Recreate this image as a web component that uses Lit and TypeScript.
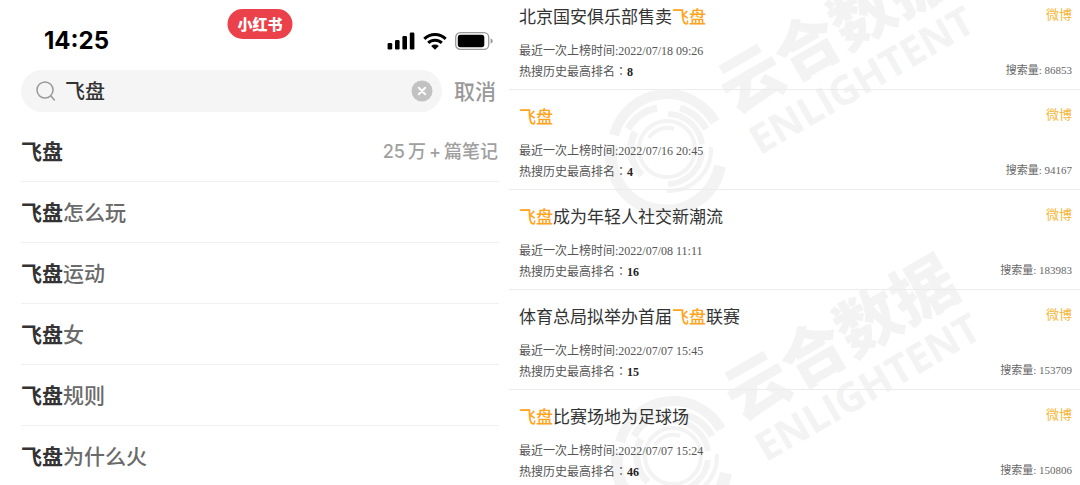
import { LitElement, html, css, svg } from "lit";
import { customElement, property, state } from "lit/decorators.js";

const KEYWORD = "飞盘";

interface Suggestion {
  tail: string;
  notes?: boolean;
}

interface HotTopic {
  before: string;
  after: string;
  time: string;
  rank: number;
  volume: number;
}

const SUGGESTIONS: Suggestion[] = [
  { tail: "", notes: true },
  { tail: "怎么玩" },
  { tail: "运动" },
  { tail: "女" },
  { tail: "规则" },
  { tail: "为什么火" },
];

const TOPICS: HotTopic[] = [
  { before: "北京国安俱乐部售卖", after: "", time: "2022/07/18 09:26", rank: 8, volume: 86853 },
  { before: "", after: "", time: "2022/07/16 20:45", rank: 4, volume: 94167 },
  { before: "", after: "成为年轻人社交新潮流", time: "2022/07/08 11:11", rank: 16, volume: 183983 },
  { before: "体育总局拟举办首届", after: "联赛", time: "2022/07/07 15:45", rank: 15, volume: 153709 },
  { before: "", after: "比赛场地为足球场", time: "2022/07/07 15:24", rank: 46, volume: 150806 },
];

@customElement("search-panel")
export class SearchPanel extends LitElement {
  @state() private query = KEYWORD;

  static styles = css`
    :host {
      display: block;
      padding: 0 10px 0 21px;
      font-family: "Inter", "Noto Sans CJK SC", sans-serif;
    }
    .status {
      position: relative;
      display: flex;
      justify-content: space-between;
      align-items: flex-end;
      height: 54px;
      padding: 0 6px 0 23px;
      box-sizing: border-box;
    }
    .time {
      font-size: 24px;
      line-height: 26px;
      font-weight: 700;
      color: #000;
    }
    .brand {
      position: absolute;
      top: 9px;
      left: 50%;
      transform: translateX(-50%);
      padding: 0 10px;
      border-radius: 15px;
      background: #eb414a;
      color: #fff;
      font-family: "Noto Sans CJK SC", sans-serif;
      font-weight: 900;
      font-size: 15px;
      line-height: 30px;
      white-space: nowrap;
    }
    .indicators {
      display: flex;
      align-items: center;
      height: 26px;
      gap: 8px;
    }
    .indicators svg,
    .magnifier,
    .clear svg {
      display: block;
      flex: none;
    }
    .search {
      display: flex;
      align-items: center;
      gap: 12px;
      padding: 16px 3px 9px 0;
    }
    .field {
      display: flex;
      align-items: center;
      flex: 1;
      min-width: 0;
      height: 42px;
      padding: 0 9px 0 14px;
      gap: 8px;
      border-radius: 21px;
      background: #f5f5f5;
      box-sizing: border-box;
    }
    input {
      flex: 1;
      min-width: 0;
      padding: 0;
      border: 0;
      outline: 0;
      background: none;
      font: 500 20px/30px "Noto Sans CJK SC", sans-serif;
      color: #333;
    }
    button {
      padding: 0;
      border: 0;
      background: none;
      cursor: pointer;
    }
    .cancel {
      padding-bottom: 2px;
      font: 500 21px/30px "Noto Sans CJK SC", sans-serif;
      color: #999;
    }
    ul {
      margin: 0;
      padding: 0;
      list-style: none;
    }
    li + li {
      border-top: 1px solid #f0f0f0;
    }
    .row {
      display: flex;
      justify-content: space-between;
      align-items: center;
      height: 60px;
      padding: 0 1px 2px 0;
      box-sizing: border-box;
      color: #6a6a6a;
      font-family: "Noto Sans CJK SC", sans-serif;
      font-size: 21px;
      font-weight: 500;
      line-height: 30px;
      text-decoration: none;
      white-space: nowrap;
    }
    b {
      font-weight: 700;
      color: #333;
    }
    .notes {
      display: flex;
      gap: 3px;
      padding-top: 3px;
      color: #a0a0a0;
      font-family: "Inter", "Noto Sans CJK SC", sans-serif;
      font-size: 18px;
    }
  `;

  render() {
    return html`
      <header class="status">
        <span class="time">14:25</span>
        <span class="brand">小红书</span>
        <div class="indicators">
          <svg width="28" height="18" viewBox="0 0 28 18" aria-hidden="true">
            <rect x="0.6" y="11" width="4.6" height="6.5" rx="1.3" />
            <rect x="8" y="8" width="4.6" height="9.5" rx="1.3" />
            <rect x="15.4" y="4" width="4.6" height="13.5" rx="1.3" />
            <rect x="22.8" y="0.5" width="4.6" height="17" rx="1.3" />
          </svg>
          <svg width="24" height="18" viewBox="0 0 24 18" aria-hidden="true">
            <g fill="none" stroke="#000" stroke-width="3">
              <path d="M1.3 6.8 A15.5 15.5 0 0 1 22.7 6.8" />
              <path d="M5.2 10.9 A9.8 9.8 0 0 1 18.8 10.9" />
            </g>
            <path d="M8.2 13.9 A5.6 5.6 0 0 1 15.8 13.9 L12 17.7 Z" />
          </svg>
          <svg width="38" height="18" viewBox="0 0 38 18" aria-hidden="true">
            <rect x="0.7" y="0.7" width="33" height="16.6" rx="4.6" fill="none" stroke="#999" stroke-width="1.3" />
            <rect x="2.8" y="2.8" width="26.5" height="12.4" rx="2.6" />
            <path d="M35.6 6.2 Q37.8 7.2 37.8 9 Q37.8 10.8 35.6 11.8 Z" fill="#999" />
          </svg>
        </div>
      </header>
      <form class="search" @submit=${(e: Event) => e.preventDefault()}>
        <div class="field">
          <svg class="magnifier" width="22" height="22" viewBox="0 0 22 22" fill="none" stroke="#999" stroke-width="1.5" stroke-linecap="round" aria-hidden="true">
            <circle cx="10" cy="10" r="8" />
            <path d="M15.8 15.8 L19.4 20" />
          </svg>
          <input
            type="text"
            aria-label="搜索"
            .value=${this.query}
            @input=${(e: Event) => (this.query = (e.target as HTMLInputElement).value)}
          />
          <button class="clear" type="button" aria-label="清除" @click=${() => (this.query = "")}>
            <svg width="22" height="22" viewBox="0 0 22 22" aria-hidden="true">
              <circle cx="11" cy="11" r="10.5" fill="#c2c2c2" />
              <path d="M7.8 7.8 L14.2 14.2 M14.2 7.8 L7.8 14.2" stroke="#fff" stroke-width="2" stroke-linecap="round" />
            </svg>
          </button>
        </div>
        <button class="cancel" type="button">取消</button>
      </form>
      <ul>
        ${SUGGESTIONS.map(
          (s) => html`<li>
            <a class="row" href="#">
              <span><b>${KEYWORD}</b>${s.tail}</span>
              ${s.notes
                ? html`<span class="notes"><span>25</span><span>万</span><span>+</span><span>篇笔记</span></span>`
                : null}
            </a>
          </li>`
        )}
      </ul>
    `;
  }
}

const watermark = (x: number, y: number) => svg`
  <g transform="translate(${x} ${y})">
    <g class="ring">
      <path stroke-width="10" d="M-53 -14 A55 55 0 0 1 48 -27" />
      <path stroke-width="12" d="M-55 -4 A55 55 0 1 0 53 17" />
      <path stroke-width="7" d="M-39 -20 A43 43 0 0 1 -10 -41" />
      <path stroke-width="7" d="M13 -41 A43 43 0 0 1 39 -20" />
      <path stroke-width="7" d="M-32 -17 A36 36 0 0 0 -25 26" />
      <path stroke-width="6" d="M1 -35 A35 35 0 0 1 35 -5" />
      <path stroke-width="6" d="M35 4 A35 35 0 0 1 1 35" />
      <path stroke-width="4" d="M44 -2 A42 42 0 0 1 0 42" />
      <circle stroke-width="4" r="28" />
      <path stroke-width="4" d="M-18 -11 A21 21 0 0 1 7 -20" />
    </g>
    <g transform="rotate(-30)">
      <text class="mark-cn" x="76" y="5">云合数据</text>
      <text class="mark-en" x="77" y="52">ENLIGHTENT</text>
    </g>
  </g>
`;

@customElement("hot-topic")
export class HotTopicRow extends LitElement {
  @property({ attribute: false }) topic!: HotTopic;

  static styles = css`
    :host {
      display: flex;
      justify-content: space-between;
      height: 99px;
      padding: 0 8px 0 10px;
      border-bottom: 1px solid #ececec;
      font-family: "Liberation Serif", "Noto Sans CJK SC", serif;
      white-space: nowrap;
    }
    h2 {
      margin: 13px 0 12px;
      font: 400 17px/26px "Noto Sans CJK SC", sans-serif;
      color: #333;
    }
    em {
      font-style: normal;
      font-weight: 500;
      color: #ffa41c;
    }
    p {
      margin: 0;
      font-size: 12px;
      line-height: 21px;
      color: #555;
    }
    b {
      color: #222;
    }
    .colon {
      font-family: "Noto Sans CJK TC", sans-serif;
      line-height: 0;
    }
    .side {
      display: flex;
      flex-direction: column;
      align-items: flex-end;
      justify-content: space-between;
      padding: 15px 0 9px;
      box-sizing: border-box;
    }
    a {
      font-size: 13px;
      line-height: 20px;
      color: #f5b83d;
      text-decoration: none;
    }
    .volume {
      font-size: 11px;
      line-height: 20px;
      color: #666;
    }
  `;

  render() {
    const t = this.topic;
    return html`
      <div>
        <h2>${t.before}<em>${KEYWORD}</em>${t.after}</h2>
        <p>最近一次上榜时间:${t.time}</p>
        <p>热搜历史最高排名<span class="colon" lang="zh-TW">：</span><b>${t.rank}</b></p>
      </div>
      <div class="side">
        <a href="#">微博</a>
        <span class="volume">搜索量: ${t.volume}</span>
      </div>
    `;
  }
}

@customElement("topic-panel")
export class TopicPanel extends LitElement {
  static styles = css`
    :host {
      display: block;
      position: relative;
    }
    .watermarks {
      position: absolute;
      inset: 0;
      width: 100%;
      height: 100%;
      overflow: hidden;
    }
    .ring {
      fill: none;
      stroke: #f3f3f3;
    }
    .mark-cn {
      fill: #f3f3f3;
      font: 900 64px "Noto Sans CJK SC", sans-serif;
    }
    .mark-en {
      fill: #f3f3f3;
      font: 700 40px "Open Sans", sans-serif;
    }
    .list {
      position: relative;
      margin-top: -10px;
    }
  `;

  render() {
    return html`
      <svg class="watermarks" aria-hidden="true">${watermark(158, 149)} ${watermark(164, 456)}</svg>
      <div class="list">
        ${TOPICS.map((t) => html`<hot-topic .topic=${t}></hot-topic>`)}
      </div>
    `;
  }
}

@customElement("app-root")
export class AppRoot extends LitElement {
  static styles = css`
    :host {
      display: grid;
      grid-template-columns: 509fr 571fr;
      height: 100vh;
      overflow: hidden;
      background: #fff;
    }
  `;

  render() {
    return html`
      <search-panel></search-panel>
      <topic-panel></topic-panel>
    `;
  }
}
